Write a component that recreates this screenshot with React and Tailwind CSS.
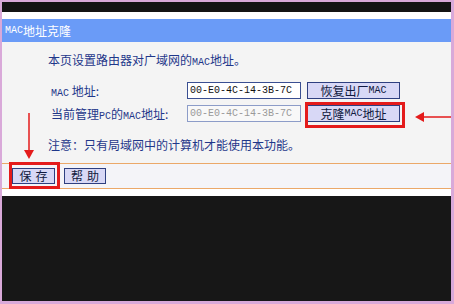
import React from "react";

const M = ({ children }) => (
  <span className="font-['Liberation_Mono',monospace] text-[10px] leading-[10px]">{children}</span>
);

export default function App() {
  return (
    <div className="w-[454px] h-[304px] bg-[#d9a9d9] pl-[2px] pr-[3px] pt-[2px] pb-[3px] font-['Noto_Sans_CJK_SC',sans-serif] text-[12px]">
      <div className="relative flex h-full flex-col">
        <div className="h-[10px] bg-[#141414]" />
        <div className="h-[7px] bg-white" />
        <div className="flex h-[23px] items-center bg-[#6a9bf7] pl-[3px] text-white leading-[14px]">
          <M>MAC</M>地址克隆
        </div>
        <div className="h-[121px] bg-[#f4f4f4] pl-[46px] pt-[10px] text-[#1f378a]">
          <div className="h-[16px] leading-[16px]">
            本页设置路由器对广域网的<M>MAC</M>地址。
          </div>
          <div className="mt-[14px] flex flex-col gap-[6px] pl-[3px]">
            <div className="flex h-[17px] items-center">
              <div className="w-[136px] leading-[16px]">
                <M>MAC</M>&nbsp;地址:
              </div>
              <div className="flex h-[17px] w-[114px] items-center border border-[#3a4f92] bg-white pl-[2px] font-['Liberation_Mono',monospace] text-[10px] text-[#111]">
                00-E0-4C-14-3B-7C
              </div>
              <button className="ml-[6px] flex h-[17px] w-[93px] items-center justify-center border border-[#2e3f80] bg-[#d8d8f6] text-[#111a40] leading-[14px]">
                恢复出厂<M>MAC</M>
              </button>
            </div>
            <div className="flex h-[17px] items-center">
              <div className="w-[136px] leading-[16px]">
                当前管理<M>PC</M>的<M>MAC</M>地址:
              </div>
              <div className="flex h-[17px] w-[114px] items-center border border-[#8c9cc8] bg-[#f8f8f8] pl-[2px] font-['Liberation_Mono',monospace] text-[10px] text-[#9a9a9a]">
                00-E0-4C-14-3B-7C
              </div>
              <button className="ml-[6px] flex h-[17px] w-[93px] items-center justify-center border border-[#2e3f80] bg-[#d8d8f6] text-[#111a40] leading-[14px]">
                克隆<M>MAC</M>地址
              </button>
            </div>
          </div>
          <div className="mt-[15px] h-[16px] leading-[16px]">注意：只有局域网中的计算机才能使用本功能。</div>
        </div>
        <div className="h-px bg-[#eba869]" />
        <div className="flex h-[24px] items-center gap-[9px] bg-[#f4f4f8] pl-[10px]">
          <button className="flex h-[16px] w-[43px] items-center justify-center border border-[#2e3f80] bg-[#d8d8f6] text-[#111a40] leading-[14px] tracking-[4px] pl-[4px]">
            保存
          </button>
          <button className="flex h-[16px] w-[42px] items-center justify-center border border-[#2e3f80] bg-[#d8d8f6] text-[#111a40] leading-[14px] tracking-[4px] pl-[4px]">
            帮助
          </button>
        </div>
        <div className="h-px bg-[#eba869]" />
        <div className="h-[7px] bg-white" />
        <div className="flex-1 bg-[#171717]" />

        {/* annotations */}
        <div className="absolute left-[7px] top-[160px] h-[27px] w-[51px] border-[3px] border-[#e41b1b]" />
        <div className="absolute left-[303px] top-[100px] h-[26px] w-[100px] border-[3px] border-[#e41b1b]" />
        <svg className="absolute left-[20px] top-[110px]" width="16" height="48" viewBox="0 0 16 48">
          <line x1="7" y1="1" x2="7" y2="40" stroke="#e41b1b" strokeWidth="1.5" />
          <polygon points="2,38 12,38 7,47" fill="#e41b1b" />
        </svg>
        <svg className="absolute left-[412px] top-[108px]" width="37" height="16" viewBox="0 0 37 16">
          <line x1="8" y1="7" x2="37" y2="7" stroke="#e41b1b" strokeWidth="1.5" />
          <polygon points="1,7 10,2 10,12" fill="#e41b1b" />
        </svg>
      </div>
    </div>
  );
}
